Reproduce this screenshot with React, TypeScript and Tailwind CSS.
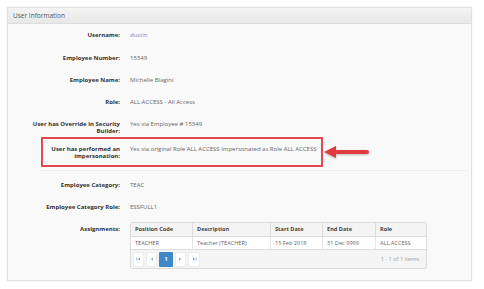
import React from "react";

const font = { fontFamily: '"Open Sans", "Noto Sans", sans-serif' };

function Row({ label, children, className = "" }: { label: React.ReactNode; children: React.ReactNode; className?: string }) {
  return (
    <div className={`flex leading-[7px] ${className}`}>
      <div className="w-[95px] shrink-0 text-right font-bold text-[6px] text-[#333] whitespace-nowrap">{label}</div>
      <div className="ml-[10px] text-[6px] text-[#666] whitespace-nowrap">{children}</div>
    </div>
  );
}

function PagerBtn({ children, active = false, w = "w-[11px]" }: { children: React.ReactNode; active?: boolean; w?: string }) {
  return (
    <div
      className={`${w} h-[15px] flex items-center justify-center rounded-[1px] ${
        active ? "bg-[#3f88c8] text-white" : "bg-white border border-[#ececec]"
      }`}
    >
      {children}
    </div>
  );
}

function Tri({ dir = "right", bar = "" }: { dir?: "left" | "right"; bar?: "left" | "right" | "" }) {
  return (
    <svg width="5" height="4" viewBox="0 0 5 4" fill="#7aa6d6">
      {bar === "left" && <rect x="0.5" y="0.5" width="0.8" height="3" />}
      {dir === "left" ? <polygon points="4,0.5 4,3.5 1.8,2" /> : <polygon points="1,0.5 1,3.5 3.2,2" />}
      {bar === "right" && <rect x="3.7" y="0.5" width="0.8" height="3" />}
    </svg>
  );
}

export default function App() {
  return (
    <div className="w-[484px] h-[289px] bg-white overflow-hidden" style={font}>
      <div className="ml-[7px] mt-[7px] w-[465px] h-[274px] border border-[#e2e2e2] bg-[#f9f9f9] shadow-[0_0_2px_rgba(0,0,0,0.06)] flex flex-col">
        <div className="h-[16px] border-b border-[#dedede] bg-gradient-to-b from-[#f4f4f4] to-[#e8e8e8] flex items-center pl-[5px] text-[6.5px] text-[#555]">
          User Information
        </div>
        <div className="pl-[17px] pr-[5px] pt-[8px] flex flex-col">
          <Row label="Username:">
            <span className="text-[#6f8fc9]">dustin</span>
          </Row>
          <Row label="Employee Number:" className="mt-[16px]">15349</Row>
          <Row label="Employee Name:" className="mt-[15px]">Michelle Blagini</Row>
          <Row label="Role:" className="mt-[15px]">ALL ACCESS - All Access</Row>
          <Row
            label={
              <>
                User has Override in Security
                <br />
                Builder:
              </>
            }
            className="mt-[15px]"
          >
            Yes via Employee # 15349
          </Row>
          <div className="mt-[2px] ml-[16px] flex items-center">
            <div className="flex leading-[7px] border-2 border-[#e2484d] pt-[6.5px] pb-[5.5px] pr-[4px]">
              <div className="w-[77px] shrink-0 text-right font-bold text-[6px] text-[#333] whitespace-nowrap">
                User has performed an
                <br />
                impersonation:
              </div>
              <div className="ml-[10px] text-[6px] text-[#666] whitespace-nowrap">
                Yes via original Role ALL ACCESS Impersonated as Role ALL ACCESS
              </div>
            </div>
            <svg width="46" height="14" viewBox="0 0 46 14" className="ml-[1px]" style={{ filter: "drop-shadow(0 1px 1px rgba(0,0,0,0.25))" }}>
              <polygon points="0,7 12,1 12,13" fill="#e03a3e" />
              <rect x="11" y="5" width="34" height="4" rx="2" fill="#e03a3e" />
            </svg>
          </div>
          <div className="mt-[3px] ml-[16px] h-px bg-[#ececec]" />
          <Row label="Employee Category:" className="mt-[11px]">TEAC</Row>
          <Row label="Employee Category Role:" className="mt-[15px]">ESSFULL1</Row>
          <div className="mt-[11px] flex">
            <div className="w-[95px] shrink-0 text-right font-bold text-[6px] text-[#333] leading-[7px] pt-[4px]">Assignments:</div>
            <div className="ml-[10px] w-[297px] border border-[#dcdcdc] rounded-[2px] text-[5.6px] leading-[7px] overflow-hidden">
              <div className="grid grid-cols-[62px_78px_52px_53px_1fr] h-[14px] bg-[#f4f4f4] border-b border-[#dcdcdc] font-bold text-[#444]">
                <div className="px-[4px] flex items-center border-r border-[#dcdcdc]">Position Code</div>
                <div className="px-[4px] flex items-center border-r border-[#dcdcdc]">Description</div>
                <div className="px-[4px] flex items-center border-r border-[#dcdcdc]">Start Date</div>
                <div className="px-[4px] flex items-center border-r border-[#dcdcdc]">End Date</div>
                <div className="px-[4px] flex items-center">Role</div>
              </div>
              <div className="grid grid-cols-[62px_78px_52px_53px_1fr] h-[13px] bg-white border-b border-[#dcdcdc] text-[#666]">
                <div className="px-[4px] flex items-center border-r border-[#e6e6e6]">TEACHER</div>
                <div className="px-[4px] flex items-center border-r border-[#e6e6e6]">Teacher (TEACHER)</div>
                <div className="px-[4px] flex items-center border-r border-[#e6e6e6]">15 Feb 2018</div>
                <div className="px-[4px] flex items-center border-r border-[#e6e6e6]">31 Dec 9999</div>
                <div className="px-[4px] flex items-center">ALL ACCESS</div>
              </div>
              <div className="h-[18px] bg-[#f4f4f4] flex items-center pl-[2px] pr-[7px]">
                <div className="flex items-center gap-[2px]">
                  <PagerBtn><Tri dir="left" bar="left" /></PagerBtn>
                  <PagerBtn><Tri dir="left" /></PagerBtn>
                  <PagerBtn active w="w-[14px]"><span className="text-[5.5px] font-bold">1</span></PagerBtn>
                  <PagerBtn><Tri dir="right" /></PagerBtn>
                  <PagerBtn w="w-[12px]"><Tri dir="right" bar="right" /></PagerBtn>
                </div>
                <div className="ml-auto text-[#a0a0a0]">1 - 1 of 1 items</div>
              </div>
            </div>
          </div>
        </div>
      </div>
    </div>
  );
}
